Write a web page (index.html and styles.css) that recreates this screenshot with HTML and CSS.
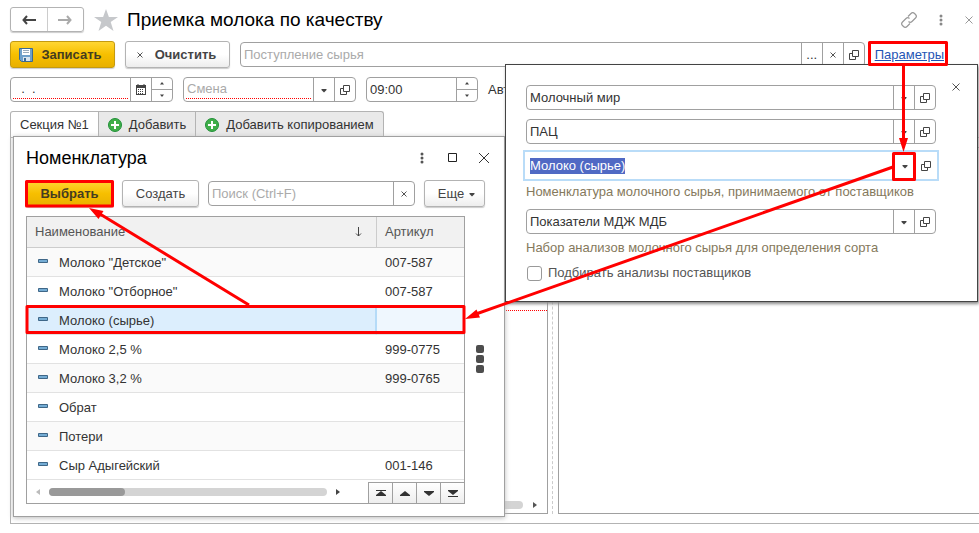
FILE: index.html
```html
<!DOCTYPE html>
<html lang="ru">
<head>
<meta charset="utf-8">
<title>Приемка молока по качеству</title>
<link rel="stylesheet" href="styles.css">
</head>
<body>
<svg class="defs" aria-hidden="true">
  <symbol id="open" viewBox="0 0 10 10"><path d="M3.5.5h6v6h-6zM3.5 3.5h-3v6h6v-3" fill="none" stroke="#444"/></symbol>
  <symbol id="down" viewBox="0 0 10 10"><path d="M2.5 4h5v1l-2.5 2.500-2.500-2.500z" fill="#444"/></symbol>
  <symbol id="x" viewBox="0 0 10 10"><path d="M2.500 2.500l5 5M7.500 2.500l-5 5" fill="none" stroke="#555"/></symbol>
  <symbol id="plus" viewBox="0 0 14 14"><circle cx="7" cy="7" r="6.500" fill="#3fae49" stroke="#23903a"/><path d="M7 3v8M3 7h8" stroke="#fff" stroke-width="2"/></symbol>
  <symbol id="dots" viewBox="0 0 4 12"><circle cx="2" cy="2" r="1.500"/><circle cx="2" cy="6" r="1.500"/><circle cx="2" cy="10" r="1.500"/></symbol>
  <symbol id="item" viewBox="0 0 10 4"><path d="M.5.5h9v3h-9z" fill="#74acd4" stroke="#3f6788"/></symbol>
</svg>

<main class="window">
  <header class="titlebar">
    <div class="nav">
      <button aria-label="Назад"><svg width="14" height="10" viewBox="0 0 14 10"><path d="M5 1L1.500 5 5 9M2 5h12" fill="none" stroke="#444" stroke-width="2"/></svg></button>
      <button aria-label="Вперед"><svg width="14" height="10" viewBox="0 0 14 10"><path d="M9 1l3.500 4L9 9M12 5H0" fill="none" stroke="#aaa" stroke-width="2"/></svg></button>
    </div>
    <svg class="star" width="24" height="22" viewBox="0 0 24 22"><path d="M12 0l2.900 8H24l-7.300 5.100L19.500 22 12 16.700 4.500 22l2.800-8.900L0 8h9.100z" fill="#c6c8cb"/></svg>
    <h1>Приемка молока по качеству</h1>
    <div class="window-tools">
      <svg width="16" height="16" viewBox="0 0 16 16" fill="none" stroke="#999" stroke-width="1.200"><path d="M7 4.500l3-3c1-1 2.500-1 3.500 0l1 1c1 1 1 2.500 0 3.500l-3.500 3.500c-1 1-2.500 1-3.500 0M9 11.500l-3 3c-1 1-2.500 1-3.500 0l-1-1c-1-1-1-2.500 0-3.500L5 6.500c1-1 2.500-1 3.500 0"/></svg>
      <svg width="4" height="12" fill="#888"><use href="#dots"/></svg>
      <svg width="8" height="8" viewBox="0 0 8 8"><path d="M.5.5l7 7M7.500.5l-7 7" stroke="#999"/></svg>
    </div>
  </header>

  <div class="commands">
    <button class="btn primary save"><svg width="14" height="14" viewBox="0 0 14 14"><path d="M.5.5h13v13h-11l-2-2z" fill="#6fa0cb" stroke="#3c6a94"/><path d="M3 1h8v6H3z" fill="#fff"/><path d="M4 2.500h6M4 4.500h6" stroke="#9ab"/><path d="M4 9h7v4H4z" fill="#d9e4ee"/><path d="M5 10h2v3H5z" fill="#3c6a94"/></svg>Записать</button>
    <button class="btn bold clear"><svg width="10" height="10"><use href="#x"/></svg>Очистить</button>
    <div class="field grow">
      <input type="text" aria-label="Поступление сырья" placeholder="Поступление сырья">
      <button aria-label="Выбрать из списка">...</button>
      <button aria-label="Очистить поле"><svg width="10" height="10"><use href="#x"/></svg></button>
      <button aria-label="Открыть"><svg width="10" height="10"><use href="#open"/></svg></button>
    </div>
    <a class="params" href="#params">Параметры</a>
  </div>

  <div class="commands fields">
    <div class="field date required">
      <input type="text" aria-label="Дата" value="  .  .">
      <button aria-label="Календарь"><svg width="10" height="11" viewBox="0 0 10 11"><path d="M0 1h10v10H0z" fill="#444"/><path d="M2 0v2M8 0v2" stroke="#444"/><path d="M1 4h8v6H1z" fill="#fff"/><path d="M2 5.500h6M2 7.500h6M2 9.500h6" stroke="#444" stroke-dasharray="1 1"/></svg></button>
      <div class="spin"><button aria-label="Больше"><svg width="4" height="3" viewBox="0 0 4 3"><path d="M0 2.500L2 0l2 2.500z" fill="#444"/></svg></button><button aria-label="Меньше"><svg width="4" height="3" viewBox="0 0 4 3"><path d="M0 .5L2 3 4 .5z" fill="#444"/></svg></button></div>
    </div>
    <div class="field shift required">
      <input type="text" aria-label="Смена" placeholder="Смена">
      <button aria-label="Список смен"><svg width="10" height="10"><use href="#down"/></svg></button>
      <button aria-label="Открыть смену"><svg width="10" height="10"><use href="#open"/></svg></button>
    </div>
    <div class="field time">
      <input type="text" aria-label="Время" value="09:00">
      <div class="spin"><button aria-label="Позже"><svg width="4" height="3" viewBox="0 0 4 3"><path d="M0 2.500L2 0l2 2.500z" fill="#444"/></svg></button><button aria-label="Раньше"><svg width="4" height="3" viewBox="0 0 4 3"><path d="M0 .5L2 3 4 .5z" fill="#444"/></svg></button></div>
    </div>
    <span>Авт</span>
  </div>

  <nav class="tabs">
    <button class="tab active">Секция №1</button>
    <button class="tab"><svg width="14" height="14"><use href="#plus"/></svg>Добавить</button>
    <button class="tab"><svg width="14" height="14"><use href="#plus"/></svg>Добавить копированием</button>
  </nav>

  <section class="panel">
    <div class="pane left">
      <div class="missing"></div>
      <div class="pane-scroll"><div class="track"></div><svg width="5" height="6" viewBox="0 0 5 6"><path d="M0 0l4 3-4 3z" fill="#555"/></svg></div>
    </div>
    <div class="splitter"></div>
    <div class="pane right"></div>
  </section>
</main>

<section class="dialog" role="dialog" aria-labelledby="dlg-title">
  <header class="dialog-head">
    <h2 id="dlg-title">Номенклатура</h2>
    <svg width="10" height="12" fill="#555"><use href="#dots"/></svg>
    <svg width="10" height="10" viewBox="0 0 10 10"><path d="M.5.5h8v8h-8z" fill="none" stroke="#222"/></svg>
    <svg width="10" height="10" viewBox="0 0 10 10"><path d="M0 0l10 10M10 0L0 10" stroke="#333"/></svg>
  </header>
  <div class="dialog-tools">
    <button class="btn primary choose">Выбрать</button>
    <button class="btn create">Создать</button>
    <div class="field grow">
      <input type="text" aria-label="Поиск" placeholder="Поиск (Ctrl+F)">
      <button aria-label="Очистить поиск"><svg width="10" height="10"><use href="#x"/></svg></button>
    </div>
    <button class="btn more">Еще<svg width="10" height="10"><use href="#down"/></svg></button>
  </div>
  <div class="dialog-body">
    <div class="list">
      <table>
        <thead><tr><th class="name"><div>Наименование<svg width="7" height="10" viewBox="0 0 7 10"><path d="M3.500 0v9M1 6.500L3.500 9 6 6.500" fill="none" stroke="#444"/></svg></div></th><th>Артикул</th></tr></thead>
        <tbody>
          <tr><td><svg width="10" height="4"><use href="#item"/></svg>Молоко "Детское"</td><td>007-587</td></tr>
          <tr><td><svg width="10" height="4"><use href="#item"/></svg>Молоко "Отборное"</td><td>007-587</td></tr>
          <tr class="selected"><td><svg width="10" height="4"><use href="#item"/></svg>Молоко (сырье)</td><td></td></tr>
          <tr><td><svg width="10" height="4"><use href="#item"/></svg>Молоко 2,5 %</td><td>999-0775</td></tr>
          <tr><td><svg width="10" height="4"><use href="#item"/></svg>Молоко 3,2 %</td><td>999-0765</td></tr>
          <tr><td><svg width="10" height="4"><use href="#item"/></svg>Обрат</td><td></td></tr>
          <tr><td><svg width="10" height="4"><use href="#item"/></svg>Потери</td><td></td></tr>
          <tr><td><svg width="10" height="4"><use href="#item"/></svg>Сыр Адыгейский</td><td>001-146</td></tr>
        </tbody>
      </table>
      <div class="list-foot">
        <svg width="4" height="6" viewBox="0 0 4 6"><path d="M4 0L0 3l4 3z" fill="#bbb"/></svg>
        <div class="track"><div class="thumb"></div></div>
        <svg width="4" height="6" viewBox="0 0 4 6"><path d="M0 0l4 3-4 3z" fill="#444"/></svg>
        <div class="pager">
          <button aria-label="В начало"><svg width="10" height="7" viewBox="0 0 10 7"><path d="M0 0h10v1H0zM5 1l5 4v1H0V5z" fill="#333"/></svg></button>
          <button aria-label="Вверх"><svg width="10" height="5" viewBox="0 0 10 5"><path d="M5 0l5 4v1H0V4z" fill="#333"/></svg></button>
          <button aria-label="Вниз"><svg width="10" height="5" viewBox="0 0 10 5"><path d="M5 5l5-4V0H0v1z" fill="#333"/></svg></button>
          <button aria-label="В конец"><svg width="10" height="7" viewBox="0 0 10 7"><path d="M0 6h10v1H0zM5 5l5-4V0H0v1z" fill="#333"/></svg></button>
        </div>
      </div>
    </div>
    <div class="grip"><i></i><i></i><i></i></div>
  </div>
</section>

<section class="popup" id="params" aria-label="Параметры">
  <button class="popup-close" aria-label="Закрыть"><svg width="8" height="8" viewBox="0 0 8 8"><path d="M.5.5l7 7M7.500.5l-7 7" stroke="#555"/></svg></button>
  <div class="field">
    <input type="text" aria-label="Организация" value="Молочный мир">
    <button aria-label="Список"><svg width="10" height="10"><use href="#down"/></svg></button>
    <button aria-label="Открыть"><svg width="10" height="10"><use href="#open"/></svg></button>
  </div>
  <div class="field">
    <input type="text" aria-label="Подразделение" value="ПАЦ">
    <button aria-label="Список"><svg width="10" height="10"><use href="#down"/></svg></button>
    <button aria-label="Открыть"><svg width="10" height="10"><use href="#open"/></svg></button>
  </div>
  <div class="field focused">
    <input type="text" id="product" aria-label="Номенклатура" value="Молоко (сырье)">
    <button aria-label="Список"><svg width="10" height="10"><use href="#down"/></svg></button>
    <button aria-label="Открыть"><svg width="10" height="10"><use href="#open"/></svg></button>
  </div>
  <p>Номенклатура молочного сырья, принимаемого от поставщиков</p>
  <div class="field">
    <input type="text" aria-label="Набор показателей" value="Показатели МДЖ МДБ">
    <button aria-label="Список"><svg width="10" height="10"><use href="#down"/></svg></button>
    <button aria-label="Открыть"><svg width="10" height="10"><use href="#open"/></svg></button>
  </div>
  <p>Набор анализов молочного сырья для определения сорта</p>
  <label class="check"><input type="checkbox">Подбирать анализы поставщиков</label>
</section>

<svg class="marks" width="979" height="533" viewBox="0 0 979 533" aria-hidden="true">
  <g fill="none" stroke="#f00" stroke-width="3" stroke-linejoin="round">
    <path d="M869.500 42.500h77v22h-77zM893.500 153.500h21v26h-21zM26.500 181.500h86v24.500h-86zM27 306.500h437v26H27z"/>
    <path d="M903.500 65v76M893 167L476 314M249 305L100 214"/>
  </g>
  <path d="M899 138h9l-4.500 14zM465 319l11.500-9.500 3.500 8zM89 208l14.500 3-5 8z" fill="#f00"/>
</svg>
<script>
  const product = document.getElementById("product");
  product.focus();
  product.select();
</script>
</body>
</html>
```

FILE: styles.css
```css
* { box-sizing: border-box; }
body {
  margin: 0;
  position: relative;
  overflow: hidden;
  background: #fff;
  color: #333;
  font: 13px/16px "Liberation Sans", Arial, sans-serif;
}
svg { flex: none; display: block; }
.defs { position: absolute; width: 0; height: 0; }
button { margin: 0; padding: 0; border: 0; background: none; color: inherit; font: inherit; }
h1, h2 { margin: 0; color: #000; font-size: 18px; line-height: 24px; font-weight: 400; }
h1 { font-size: 19px; }

.window { display: flex; flex-direction: column; min-height: 100vh; padding: 7px 0 9px 10px; }
.titlebar { display: flex; align-items: center; height: 25px; }
.nav { display: flex; width: 74px; height: 25px; border: 1px solid #b3b3b3; border-radius: 3px; box-shadow: 0 1px 1px #ccc; }
.nav button { flex: 1; display: flex; align-items: center; justify-content: center; }
.nav button + button { border-left: 1px solid #ccc; }
.star { margin: 0 9px 0 10px; }
.window-tools { display: flex; align-items: center; gap: 22px; margin-left: auto; padding-right: 6px; }

.commands { display: flex; align-items: center; gap: 10px; margin-top: 9px; height: 27px; padding-right: 35px; }
.fields { height: 25px; }
.btn {
  display: flex; align-items: center; justify-content: center;
  height: 27px; border: 1px solid #b3b3b3; border-radius: 3px;
  background: linear-gradient(#fff 50%, #ededed);
  box-shadow: 0 1px 1px #ccc;
  color: #444;
}
.primary { border-color: #c49a10; background: linear-gradient(#ffd633, #f7bf00 50%, #e8b000); color: #443c20; font-weight: 700; }
.bold { font-weight: 700; }
.save { width: 105px; gap: 8px; padding-right: 4px; }
.clear { width: 105px; gap: 10px; padding-right: 4px; }
.field { display: flex; height: 25px; border: 1px solid #a0a0a0; border-radius: 4px; background: #fff; }
.grow { flex: 1; }
.field input {
  flex: 1; min-width: 0; margin: 0; padding: 0 3px; border: 0; outline: 0;
  background: none; color: #333; font: inherit;
}
.field input::placeholder { color: #aaa; opacity: 1; }
.field input::selection { background: #5069c4; color: #fff; }
.field > button { display: flex; align-items: center; justify-content: center; width: 21px; border-left: 1px solid #a0a0a0; }
.field.required input { margin: 0 2px 2px; padding: 2px 1px 0; border-bottom: 1px dotted #f00; }
.spin { display: flex; flex-direction: column; width: 21px; border-left: 1px solid #a0a0a0; }
.spin button { flex: 1; display: flex; align-items: center; justify-content: center; }
.spin button + button { border-top: 1px solid #a0a0a0; }
.date { width: 163px; }
.date input { white-space: pre; }
.shift { width: 173px; }
.time { width: 112px; }
.params { color: #1f55b5; text-decoration: underline; }

.tabs { display: flex; margin-top: 9px; height: 26px; }
.tab {
  display: flex; align-items: center; gap: 7px; padding: 0 9px;
  border: 1px solid #b3b3b3; border-left-width: 0; border-bottom: 0; background: #e9e9e9;
}
.tab:last-child { border-radius: 0 3px 0 0; }
.active { border-left-width: 1px; border-radius: 3px 0 0 0; background: #fff; }
.panel { display: flex; flex: 1; border: 1px solid #b3b3b3; border-right: 0; padding: 9px 0 9px 10px; }
.pane { display: flex; flex-direction: column; border: 1px solid #a0a0a0; }
.left { width: 527px; justify-content: flex-end; }
.missing { height: 1px; margin-bottom: 189px; border-bottom: 1px dotted #f00; }
.pane-scroll { display: flex; align-items: center; gap: 10px; height: 13px; padding: 0 9px 4px; }
.track { flex: 1; height: 8px; border-radius: 4px; background: #d4d4d4; }
.splitter { width: 5px; border-right: 1px dashed #ccc; }
.right { flex: 1; margin-left: 5px; border-right: 0; }

.dialog {
  position: absolute; left: 13px; top: 136px; width: 492px; padding: 9px 19px 12px 12px;
  border: 1px solid #a0a0a0; background: #fff; box-shadow: 0 1px 5px #bbb;
}
.dialog-head { display: flex; align-items: center; gap: 21px; height: 24px; padding-right: 3px; margin-right: -7px; }
.dialog-head h2 { margin-right: auto; }
.dialog-tools { display: flex; align-items: center; gap: 9px; margin-top: 10px; height: 27px; }
.choose { width: 87px; }
.create { width: 77px; }
.more { width: 61px; gap: 3px; padding-left: 6px; }
.dialog-body { display: flex; gap: 11px; margin-top: 9px; margin-right: -1px; }
.list { flex: 1; border: 1px solid #a0a0a0; }
table { width: 100%; border-collapse: separate; border-spacing: 0; table-layout: fixed; }
th, td { height: 29px; padding: 2px 8px 0; border-bottom: 1px solid #e2e2e2; text-align: left; font-weight: 400; }
th { height: 31px; padding-top: 0; border-bottom-color: #ccc; background: #f1f1f1; color: #555; }
.name { width: 350px; border-right: 1px solid #ccc; }
.name div { display: flex; align-items: center; justify-content: space-between; padding-right: 6px; }
td:first-child svg { display: inline-block; margin: 0 11px 0 3px; vertical-align: 4px; }
tbody tr:nth-child(odd) { background: #fafafa; }
tbody .selected td { background: #eff7fe; }
tbody .selected td:first-child { border-right: 2px solid #b5dbf8; background: #dceefd; }
.list-foot { display: flex; align-items: center; gap: 10px; height: 23px; padding-left: 9px; }
.list-foot .track { margin: 0 -1px; }
.thumb { width: 76px; height: 8px; border-radius: 4px; background: #999; }
.pager { display: flex; align-self: flex-end; height: 21px; margin-left: 18px; border-top: 1px solid #a0a0a0; }
.pager button { display: flex; align-items: center; justify-content: center; width: 24px; border-left: 1px solid #a0a0a0; background: linear-gradient(#fff, #eee); }
.grip { display: flex; flex-direction: column; justify-content: center; gap: 2px; width: 10px; padding-bottom: 3px; }
.grip i { width: 8px; height: 8px; border-radius: 2px; background: #4d4d4d; }

.popup {
  position: absolute; left: 505px; top: 64px; width: 473px; padding: 20px 41px 20px 20px;
  border: 1px solid #444; background: #fff; box-shadow: 1px 2px 3px #888;
}
.popup .field { margin-bottom: 9px; }
.popup .focused { height: 31px; margin: -3px -3px 6px; padding: 1px; border: 2px solid #b9dcf8; border-radius: 0; }
.popup .focused input { padding-left: 4px; }
.focused > button { border-color: transparent; }
.popup p { margin: 0 0 9px; color: #85795c; }
.popup .field + p { margin-top: -3px; }
.popup-close { position: absolute; right: 17px; top: 18px; }
.check { display: flex; align-items: center; gap: 6px; color: #555; }
.check input { appearance: none; width: 15px; height: 15px; margin: 0 0 0 1px; border: 1px solid #999; border-radius: 3px; }

.marks { position: absolute; left: 0; top: 0; pointer-events: none; }
```
